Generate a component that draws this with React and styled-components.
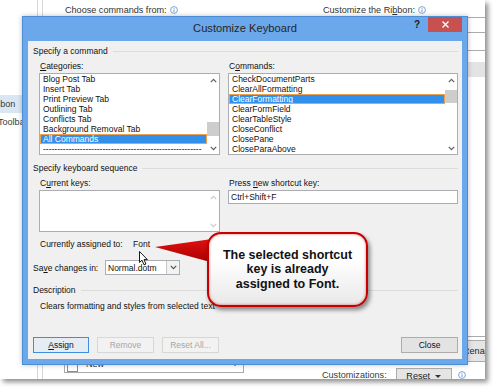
import React from 'react'
import styled, { createGlobalStyle, css } from 'styled-components'

const GlobalStyle = createGlobalStyle`
  html, body { margin: 0; padding: 0; background: #fff; }
  body { font-family: "Liberation Sans", Arial, sans-serif; }
  * { box-sizing: border-box; }
`

const Stage = styled.div`
  position: relative;
  width: 500px;
  height: 392px;
  overflow: hidden;
  background: #fff;
`

/* ---------- Word Options page behind the dialog ---------- */

const OptionsPage = styled.div`
  display: flex;
  width: 485px;
  height: 379px;
  background: #fff;
  overflow: hidden;
  box-shadow: 3px 3px 5px rgba(0, 0, 0, 0.45);
  font-size: 9.1px;
  color: #3b3b3b;
`

const Nav = styled.div`
  width: 38px;
  flex-shrink: 0;
  padding-top: 95px;
  border-right: 1px solid #d6d6d6;
  overflow: hidden;
`

const NavItem = styled.div`
  height: 18px;
  line-height: 18px;
  white-space: nowrap;
  text-indent: -59px;
  background: ${({ $active }) => ($active ? '#dbe6f3' : 'transparent')};
`

const Main = styled.div`
  flex: 1;
  margin-left: 4px;
  padding-left: 21px;
  border-left: 1px solid #d6d6d6;
  display: grid;
  grid-template-columns: 180px 200px;
  grid-template-rows: 379px;
  column-gap: 78px;
`

const Column = styled.div`
  min-height: 0;
  display: flex;
  flex-direction: column;
  padding: 5px 0 6px;
  & > * { flex-shrink: 0; }
`

const PageLabel = styled.div`
  height: 10px;
  line-height: 10px;
  padding-left: 1px;
  display: flex;
  align-items: center;
  gap: 3px;
  white-space: nowrap;
  color: #333;
`

const Combo = styled.div`
  height: 16px;
  margin-top: 2px;
  border: 1px solid #ababab;
  background: #fff;
`

const Tree = styled.div`
  height: 287px;
  margin-top: 17px;
  padding-top: 11px;
  border: 1px solid #ababab;
`

const TreeBand = styled.div`
  height: 15px;
  background: #e3e3e3;
`

const Spacer = styled.div`
  flex: 1 1 auto !important;
`

const NewRow = styled.div`
  height: 18px;
  border: 1px solid #ababab;
  display: flex;
  align-items: center;
  gap: 8px;
  padding: 0 5px 0 2px;
  color: #333;
`

const NewText = styled.span`
  flex: 1;
`

const CheckBox = styled.span`
  width: 11px;
  height: 11px;
  margin-top: 4px;
  border: 1px solid #8d8d8d;
  background: #fff;
`

const PageButton = styled.div`
  height: ${({ $h }) => $h}px;
  width: ${({ $w }) => $w}px;
  margin-left: ${({ $left }) => $left || 0}px;
  margin-top: ${({ $top }) => $top || 0}px;
  padding-left: ${({ $start }) => ($start ? '5px' : '0')};
  border: 1px solid #acacac;
  background: #e5e5e5;
  display: flex;
  align-items: center;
  justify-content: ${({ $start }) => ($start ? 'flex-start' : 'center')};
  gap: 5px;
  white-space: nowrap;
  color: #222;
`

const CustomRow = styled.div`
  height: 16px;
  margin-top: 5px;
  display: flex;
  align-items: center;
  white-space: nowrap;
`

const InfoSlot = styled.span`
  margin-left: 6px;
  display: flex;
`

const Caret = styled.span`
  width: 0;
  height: 0;
  border-left: 3px solid transparent;
  border-right: 3px solid transparent;
  border-top: 3px solid #333;
`

const InfoIcon = () => (
  <svg width="8" height="8" viewBox="0 0 8 8">
    <circle cx="4" cy="4" r="3.4" fill="none" stroke="#6d9ad3" strokeWidth="0.9" />
    <line x1="4" y1="3.4" x2="4" y2="6.1" stroke="#6d9ad3" strokeWidth="1" />
    <circle cx="4" cy="2.2" r="0.55" fill="#6d9ad3" />
  </svg>
)

/* ---------- Customize Keyboard dialog ---------- */

const Dialog = styled.div`
  position: absolute;
  left: 22px;
  top: 16px;
  width: 446px;
  height: 349px;
  padding: 0 5px 5px;
  background: #6ba8eb;
  border: 1px solid #4c8dd6;
  box-shadow: 0 0 5px rgba(0, 0, 0, 0.25);
  display: flex;
  flex-direction: column;
  font-size: 8.5px;
  color: #111;
`

const TitleBar = styled.div`
  height: 24px;
  flex-shrink: 0;
  display: grid;
  grid-template-columns: 1fr auto 1fr;
  align-items: start;
`

const Title = styled.div`
  grid-column: 2;
  padding-top: 5px;
  font-size: 11.2px;
  color: #262626;
  white-space: nowrap;
`

const TitleControls = styled.div`
  justify-self: end;
  display: flex;
  align-items: flex-start;
  gap: 8px;
`

const Help = styled.span`
  padding-top: 2px;
  font-size: 10px;
  font-weight: bold;
  color: #1d1d1d;
`

const CloseBox = styled.div`
  width: 34px;
  height: 15px;
  background: #c75050;
  display: flex;
  align-items: center;
  justify-content: center;
`

const Client = styled.div`
  flex: 1;
  background: #f0f0f0;
  padding: 4px 4px 6px 5px;
  display: flex;
  flex-direction: column;
`

const GroupHeader = styled.div`
  height: 12px;
  line-height: 12px;
  margin-top: ${({ $top }) => $top || 0}px;
  display: flex;
  align-items: center;
  gap: 5px;
  white-space: nowrap;
  &::after {
    content: "";
    flex: 1;
    height: 1px;
    background: #dcdcdc;
  }
`

const FieldRow = styled.div`
  margin: 3px 0 0 6px;
  display: grid;
  grid-template-columns: 181px 230px;
  column-gap: 8px;
`

const Field = styled.div`
  display: flex;
  flex-direction: column;
  gap: 1px;
`

const Label = styled.div`
  height: 12px;
  line-height: 12px;
  padding-left: 1px;
  white-space: nowrap;
`

const U = styled.span`
  text-decoration: underline;
`

const ListBox = styled.div`
  height: ${({ $h }) => $h}px;
  border: 1px solid #abadb3;
  background: #fff;
  display: flex;
  overflow: hidden;
`

const ListItems = styled.div`
  flex: 1;
  overflow: hidden;
`

const ListItem = styled.div`
  height: 10px;
  line-height: 10px;
  padding-left: 3px;
  white-space: nowrap;
  overflow: hidden;
  ${({ $selected }) =>
    $selected &&
    css`
      background: #3390ea;
      color: #fff;
      outline: 1px solid #eea04a;
      outline-offset: -1px;
    `}
`

const Scroll = styled.div`
  width: 12px;
  flex-shrink: 0;
  display: flex;
  flex-direction: column;
`

const ScrollArrow = styled.div`
  height: 12px;
  display: flex;
  align-items: center;
  justify-content: center;
`

const Track = styled.div`
  flex: 1;
`

const Thumb = styled.div`
  margin-top: ${({ $top }) => $top}px;
  height: ${({ $size }) => $size}px;
  background: #cdcdcd;
`

const TextInput = styled.div`
  height: 14px;
  line-height: 12px;
  padding-left: 2px;
  border: 1px solid #abadb3;
  background: #fff;
`

const InlineRow = styled.div`
  margin: ${({ $top }) => $top}px 0 0 ${({ $indent }) => $indent || 0}px;
  display: flex;
  align-items: center;
  white-space: nowrap;
`

const FixedLabel = styled.span`
  width: ${({ $w }) => $w}px;
  flex-shrink: 0;
`

const Select = styled.div`
  width: 75px;
  height: 15px;
  border: 1px solid #abadb3;
  background: #fff;
  display: flex;
  align-items: center;
`

const SelectText = styled.span`
  flex: 1;
  padding-left: 2px;
`

const SelectArrow = styled.span`
  width: 13px;
  height: 100%;
  border-left: 1px solid #c6c6c6;
  background: #f2f2f2;
  display: flex;
  align-items: center;
  justify-content: center;
`

const Description = styled.div`
  margin: 4px 0 0 7px;
  line-height: 12px;
  white-space: nowrap;
`

const ButtonRow = styled.div`
  margin-top: auto;
  display: flex;
  gap: 8px;
`

const Button = styled.button`
  width: ${({ $w }) => $w || 57}px;
  height: 16px;
  padding: 0;
  margin-left: ${({ $push }) => ($push ? 'auto' : '0')};
  font-family: inherit;
  font-size: 8.5px;
  color: #111;
  background: #e3e3e3;
  border: 1px solid #adadad;
  ${({ $default }) =>
    $default &&
    css`
      border-color: #3d8ee0;
      background: #e5ecf4;
    `}
  &:disabled {
    color: #a6a6a6;
    background: #f2f2f2;
    border-color: #d7d7d7;
  }
`

/* ---------- overlays ---------- */

const Callout = styled.div`
  position: absolute;
  left: 207px;
  top: 232px;
  width: 161px;
  height: 75px;
  border: 2px solid #c40000;
  border-radius: 14px;
  background: linear-gradient(#ffffff 35%, #e8e8e8);
  box-shadow: 2px 3px 4px rgba(0, 0, 0, 0.45), inset 0 0 3px rgba(190, 0, 0, 0.55);
  display: flex;
  align-items: center;
  justify-content: center;
  text-align: center;
  font: bold 12.5px/14.5px "Liberation Sans", Arial, sans-serif;
  color: #111;
`

const Tail = styled.svg`
  position: absolute;
  left: 150px;
  top: 234px;
`

const Pointer = styled.svg`
  position: absolute;
  left: 139px;
  top: 251px;
`

const Chevron = ({ up, color = '#5f5f5f' }) => (
  <svg width="7" height="5" viewBox="0 0 7 5">
    <path
      d={up ? 'M0.8 4.2 L3.5 1.3 L6.2 4.2' : 'M0.8 0.8 L3.5 3.7 L6.2 0.8'}
      fill="none"
      stroke={color}
      strokeWidth="1.2"
    />
  </svg>
)

const ScrollBar = ({ thumbTop, thumbSize, disabled }) => {
  const color = disabled ? '#c9c9c9' : '#5f5f5f'
  return (
    <Scroll>
      <ScrollArrow><Chevron up color={color} /></ScrollArrow>
      <Track>{thumbSize ? <Thumb $top={thumbTop} $size={thumbSize} /> : null}</Track>
      <ScrollArrow><Chevron color={color} /></ScrollArrow>
    </Scroll>
  )
}

const categories = [
  'Blog Post Tab',
  'Insert Tab',
  'Print Preview Tab',
  'Outlining Tab',
  'Conflicts Tab',
  'Background Removal Tab',
  'All Commands',
  '-'.repeat(56),
]

const commands = [
  'CheckDocumentParts',
  'ClearAllFormatting',
  'ClearFormatting',
  'ClearFormField',
  'ClearTableStyle',
  'CloseConflict',
  'ClosePane',
  'CloseParaAbove',
]

const WordOptions = () => (
  <OptionsPage>
    <Nav>
      <NavItem $active>Customize Ribbon</NavItem>
      <NavItem>Quick Access Toolbar</NavItem>
    </Nav>
    <Main>
      <Column>
        <PageLabel><span>Choose commands from:</span><InfoIcon /></PageLabel>
        <Combo />
        <Spacer />
        <NewRow>
          <CheckBox />
          <NewText>New</NewText>
          <Caret />
        </NewRow>
      </Column>
      <Column>
        <PageLabel><span>Customize the Ri<U>b</U>bon:</span><InfoIcon /></PageLabel>
        <Combo />
        <Tree><TreeBand /></Tree>
        <PageButton $w={60} $h={22} $left={135} $top={3} $start>
          <span>Rena<U>m</U>e</span>
        </PageButton>
        <CustomRow>
          <span>Customizations:</span>
          <PageButton $w={56} $h={16} $left={9} $top={2}>
            <span>R<U>e</U>set</span>
            <Caret />
          </PageButton>
          <InfoSlot><InfoIcon /></InfoSlot>
        </CustomRow>
      </Column>
    </Main>
  </OptionsPage>
)

const CustomizeKeyboard = () => (
  <Dialog>
    <TitleBar>
      <Title>Customize Keyboard</Title>
      <TitleControls>
        <Help>?</Help>
        <CloseBox>
          <svg width="7" height="7" viewBox="0 0 7 7">
            <path d="M0.5 0.5 L6.5 6.5 M6.5 0.5 L0.5 6.5" stroke="#fff" strokeWidth="1.3" />
          </svg>
        </CloseBox>
      </TitleControls>
    </TitleBar>
    <Client>
      <GroupHeader>Specify a command</GroupHeader>
      <FieldRow>
        <Field>
          <Label><U>C</U>ategories:</Label>
          <ListBox $h={82}>
            <ListItems>
              {categories.map(c => (
                <ListItem key={c} $selected={c === 'All Commands'}>{c}</ListItem>
              ))}
            </ListItems>
            <ScrollBar thumbTop={36} thumbSize={14} />
          </ListBox>
        </Field>
        <Field>
          <Label>C<U>o</U>mmands:</Label>
          <ListBox $h={82}>
            <ListItems>
              {commands.map(c => (
                <ListItem key={c} $selected={c === 'ClearFormatting'}>{c}</ListItem>
              ))}
            </ListItems>
            <ScrollBar thumbTop={4} thumbSize={13} />
          </ListBox>
        </Field>
      </FieldRow>

      <GroupHeader $top={7}>Specify keyboard sequence</GroupHeader>
      <FieldRow>
        <Field>
          <Label>C<U>u</U>rrent keys:</Label>
          <ListBox $h={42}>
            <ListItems />
            <ScrollBar disabled />
          </ListBox>
        </Field>
        <Field>
          <Label>Press <U>n</U>ew shortcut key:</Label>
          <TextInput>Ctrl+Shift+F</TextInput>
        </Field>
      </FieldRow>

      <InlineRow $top={7} $indent={7}>
        <FixedLabel $w={93}>Currently assigned to:</FixedLabel>
        <span>Font</span>
      </InlineRow>

      <InlineRow $top={11}>
        <FixedLabel $w={72}>Sa<U>v</U>e changes in:</FixedLabel>
        <Select>
          <SelectText>Normal.dotm</SelectText>
          <SelectArrow><Chevron color="#555" /></SelectArrow>
        </Select>
      </InlineRow>

      <GroupHeader $top={9}>Description</GroupHeader>
      <Description>Clears formatting and styles from selected text</Description>

      <ButtonRow>
        <Button $default $w={56}><U>A</U>ssign</Button>
        <Button disabled>Remove</Button>
        <Button disabled>Reset All...</Button>
        <Button $push>Close</Button>
      </ButtonRow>
    </Client>
  </Dialog>
)

export default function App() {
  return (
    <Stage>
      <GlobalStyle />
      <WordOptions />
      <CustomizeKeyboard />
      <Tail width="70" height="34" viewBox="0 0 70 34">
        <defs>
          <linearGradient id="tailFill" x1="0" y1="0" x2="0" y2="1">
            <stop offset="0" stopColor="#e01010" />
            <stop offset="1" stopColor="#a80000" />
          </linearGradient>
        </defs>
        <polygon points="5,13 62,5 64,29" fill="url(#tailFill)" />
      </Tail>
      <Callout>
        The selected shortcut
        <br />
        key is already
        <br />
        assigned to Font.
      </Callout>
      <Pointer width="10" height="15" viewBox="0 0 10 15">
        <path
          d="M0.5 0.5 L0.5 11.5 L3 9.2 L5 13.8 L6.9 13 L5 8.6 L8.4 8.6 Z"
          fill="#fff"
          stroke="#000"
          strokeWidth="0.9"
          strokeLinejoin="round"
        />
      </Pointer>
    </Stage>
  )
}
